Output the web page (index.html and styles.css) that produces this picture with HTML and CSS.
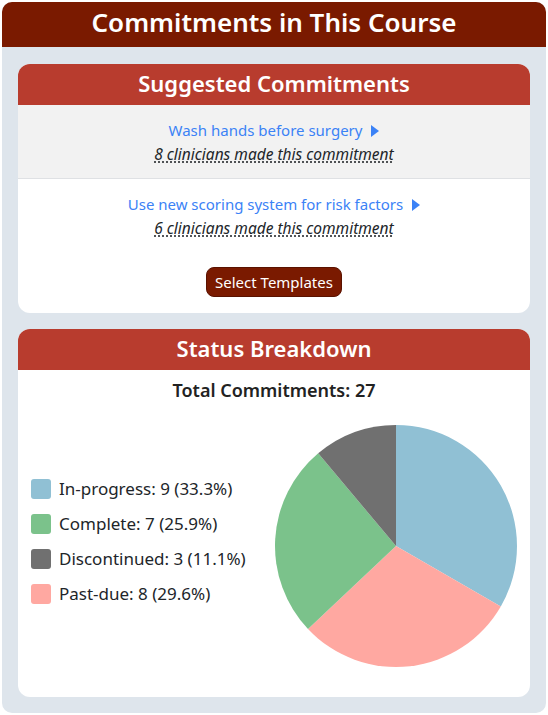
FILE: index.html
```html
<!DOCTYPE html>
<html>
<head>
<meta charset="utf-8">
<link rel="stylesheet" href="styles.css">
</head>
<body>
<div class="panel">
  <h1 class="panel-title">Commitments in This Course</h1>
  <div class="panel-body">
    <section class="card">
      <h2 class="card-title">Suggested Commitments</h2>
      <div class="suggestion suggestion-alt">
        <div class="suggestion-line"><a class="suggestion-link" href="#">Wash hands before surgery<svg class="arrow" width="8" height="12" viewBox="0 0 8 12"><path d="M0 0 L8 6 L0 12 Z" fill="#3b82f6"/></svg></a></div>
        <div class="suggestion-line"><span class="suggestion-count">8 clinicians made this commitment</span></div>
      </div>
      <div class="suggestion suggestion-last">
        <div class="suggestion-line"><a class="suggestion-link" href="#">Use new scoring system for risk factors<svg class="arrow" width="8" height="12" viewBox="0 0 8 12"><path d="M0 0 L8 6 L0 12 Z" fill="#3b82f6"/></svg></a></div>
        <div class="suggestion-line"><span class="suggestion-count">6 clinicians made this commitment</span></div>
      </div>
      <div class="actions">
        <button class="btn">Select Templates</button>
      </div>
    </section>
    <section class="card card-status">
      <h2 class="card-title">Status Breakdown</h2>
      <div class="total">Total Commitments: 27</div>
      <div class="chart-row">
        <ul class="legend">
          <li class="legend-item"><span class="swatch sw-blue"></span>In-progress: 9 (33.3%)</li>
          <li class="legend-item"><span class="swatch sw-green"></span>Complete: 7 (25.9%)</li>
          <li class="legend-item"><span class="swatch sw-gray"></span>Discontinued: 3 (11.1%)</li>
          <li class="legend-item"><span class="swatch sw-pink"></span>Past-due: 8 (29.6%)</li>
        </ul>
        <svg class="pie" width="244" height="244" viewBox="-122 -122 244 244">
          <path d="M0 0 L0 -121 A121 121 0 0 1 104.79 60.5 Z" fill="#90c0d4"/>
          <path d="M0 0 L104.79 60.5 A121 121 0 0 1 -88.0 83.0 Z" fill="#ffa8a1"/>
          <path d="M0 0 L-88.0 83.0 A121 121 0 0 1 -77.8 -92.7 Z" fill="#7bc28b"/>
          <path d="M0 0 L-77.8 -92.7 A121 121 0 0 1 0 -121 Z" fill="#707070"/>
        </svg>
      </div>
    </section>
  </div>
</div>
</body>
</html>
```
FILE: styles.css
```css
* { box-sizing: border-box; }
html, body { margin: 0; padding: 0; background: #ffffff; }
body {
  font-family: "Noto Sans", "Open Sans", sans-serif;
  color: #212529;
  padding: 2px;
}
.panel {
  background: #dee5ec;
  border-radius: 10px;
  overflow: hidden;
}
.panel-title {
  margin: 0;
  background: #7a1a00;
  color: #ffffff;
  text-align: center;
  font-size: 26px;
  font-weight: 600;
  height: 45px;
  line-height: 40px;
}
.panel-body {
  padding: 17px 16px 16px;
  display: flex;
  flex-direction: column;
  gap: 16px;
}
.card {
  background: #ffffff;
  border-radius: 12px;
  overflow: hidden;
}
.card-title {
  margin: 0;
  background: #b83c2e;
  color: #ffffff;
  text-align: center;
  font-size: 22px;
  font-weight: 600;
  height: 41px;
  line-height: 38px;
}
.suggestion {
  text-align: center;
  padding: 13px 0 12px;
  border-bottom: 1px solid #dfe1e4;
}
.suggestion-last { border-bottom: none; }
.suggestion-alt { background: #f2f2f2; }
.suggestion-line { line-height: 24px; height: 24px; }
.suggestion-link {
  color: #3b82f6;
  text-decoration: none;
  font-size: 15px;
}
.arrow { margin-left: 9px; vertical-align: -1px; }
.suggestion-count {
  font-size: 15.5px;
  font-style: italic;
  color: #212529;
  text-decoration: underline dotted;
  text-underline-offset: 2px;
}
.actions {
  text-align: center;
  padding: 15px 0 16px;
}
.btn {
  font-family: inherit;
  background: #7a1a00;
  color: #ffffff;
  border: 1px solid #5a1200;
  border-radius: 8px;
  font-size: 15px;
  height: 30px;
  padding: 0 8px;
  display: inline-block;
  vertical-align: top;
}
.total {
  text-align: center;
  font-weight: 600;
  font-size: 18px;
  line-height: 24px;
  color: #222;
  margin-top: 8px;
}
.chart-row {
  display: flex;
  align-items: center;
  justify-content: space-between;
  padding: 22px 12px 29px 13px;
}
.legend {
  list-style: none;
  margin: 0 0 10px;
  padding: 0;
  display: flex;
  flex-direction: column;
  gap: 13px;
}
.legend-item {
  display: flex;
  align-items: center;
  gap: 8px;
  font-size: 17px;
  line-height: 22px;
  color: #212529;
}
.swatch {
  width: 20px;
  height: 20px;
  border-radius: 3px;
  display: inline-block;
  flex: none;
}
.sw-blue { background: #90c0d4; }
.sw-green { background: #7bc28b; }
.sw-gray { background: #707070; }
.sw-pink { background: #ffa8a1; }
.pie { display: block; }
```
